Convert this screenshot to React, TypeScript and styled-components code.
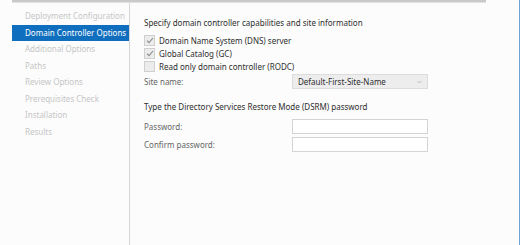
import React from "react";
import styled, { createGlobalStyle } from "styled-components";

const Global = createGlobalStyle`
  html, body { margin: 0; padding: 0; background: #fcfcfc; }
  body { font-family: "Noto Sans", "Open Sans", sans-serif; }
`;

const Page = styled.div`
  width: 520px;
  height: 245px;
  box-sizing: border-box;
  border-right: 1px solid #6ea3d6;
  background: #fcfcfc;
  display: flex;
  flex-direction: column;
  overflow: hidden;
`;

const TopBar = styled.div`
  margin-left: 12px;
  width: 474px;
  height: 2px;
  background: #c9c9c9;
  border-bottom: 1px solid #e2e2e2;
  flex: none;
`;

const Body = styled.div`
  flex: 1;
  display: flex;
`;

const Nav = styled.nav`
  width: 117px;
  margin-left: 12px;
  padding-top: 5px;
  border-right: 1px solid #d6d6d6;
  display: flex;
  flex-direction: column;
`;

const NavItem = styled.div<{ $active?: boolean }>`
  height: 16.5px;
  line-height: 16.5px;
  padding-left: 13px;
  font-size: 8px;
  white-space: nowrap;
  color: ${(p) => (p.$active ? "#ffffff" : "#c6c6c6")};
  background: ${(p) => (p.$active ? "#106ebe" : "transparent")};
`;

const Content = styled.main`
  flex: 1;
  padding: 13px 0 0 14px;
  display: flex;
  flex-direction: column;
  color: #2e2e2e;
  font-size: 8px;
`;

const Heading = styled.div`
  height: 14px;
  line-height: 14px;
  color: #2e2e2e;
`;

const CheckList = styled.div`
  margin-top: 4px;
  display: flex;
  flex-direction: column;
`;

const CheckRow = styled.label`
  height: 13px;
  display: flex;
  align-items: center;
  gap: 4px;
  line-height: 13px;
  color: #2e2e2e;
`;

const Box = styled.span`
  width: 9px;
  height: 9px;
  border: 1px solid #cfcfcf;
  background: #ececec;
  display: flex;
  align-items: center;
  justify-content: center;
  flex: none;
`;

const FormGrid = styled.div<{ $top: number }>`
  margin-top: ${(p) => p.$top}px;
  display: grid;
  grid-template-columns: 148px 136px;
  row-gap: 3px;
  align-items: center;
`;

const Label = styled.div`
  color: #666;
  line-height: 15px;
`;

const Select = styled.div`
  height: 13px;
  border: 1px solid #dcdcdc;
  background: #ededed;
  padding: 0 5px;
  display: flex;
  align-items: center;
  justify-content: space-between;
  color: #2e2e2e;
  line-height: 13px;
`;

const Input = styled.div`
  height: 13px;
  border: 1px solid #d4d4d4;
  background: #ffffff;
`;

const SubHeading = styled.div`
  margin-top: 11px;
  height: 14px;
  line-height: 14px;
  color: #2e2e2e;
`;

const Check = () => (
  <svg width="8" height="7" viewBox="0 0 8 7">
    <path d="M1 3.6 L3 5.6 L7 1" fill="none" stroke="#8a8a8a" strokeWidth="1.1" />
  </svg>
);

const Chevron = () => (
  <svg width="5" height="4" viewBox="0 0 5 4">
    <path d="M0.5 1 L2.5 3 L4.5 1" fill="none" stroke="#b8b8b8" strokeWidth="0.9" />
  </svg>
);

const navItems = [
  "Deployment Configuration",
  "Domain Controller Options",
  "Additional Options",
  "Paths",
  "Review Options",
  "Prerequisites Check",
  "Installation",
  "Results",
];

const checks = [
  { label: "Domain Name System (DNS) server", checked: true },
  { label: "Global Catalog (GC)", checked: true },
  { label: "Read only domain controller (RODC)", checked: false },
];

export default function App() {
  return (
    <>
      <Global />
      <Page>
        <TopBar />
        <Body>
          <Nav>
            {navItems.map((n, i) => (
              <NavItem key={n} $active={i === 1}>
                {n}
              </NavItem>
            ))}
          </Nav>
          <Content>
            <Heading>Specify domain controller capabilities and site information</Heading>
            <CheckList>
              {checks.map((c) => (
                <CheckRow key={c.label}>
                  <Box>{c.checked && <Check />}</Box>
                  {c.label}
                </CheckRow>
              ))}
            </CheckList>
            <FormGrid $top={1}>
              <Label>Site name:</Label>
              <Select>
                <span>Default-First-Site-Name</span>
                <Chevron />
              </Select>
            </FormGrid>
            <SubHeading>Type the Directory Services Restore Mode (DSRM) password</SubHeading>
            <FormGrid $top={5}>
              <Label>Password:</Label>
              <Input />
              <Label>Confirm password:</Label>
              <Input />
            </FormGrid>
          </Content>
        </Body>
      </Page>
    </>
  );
}
